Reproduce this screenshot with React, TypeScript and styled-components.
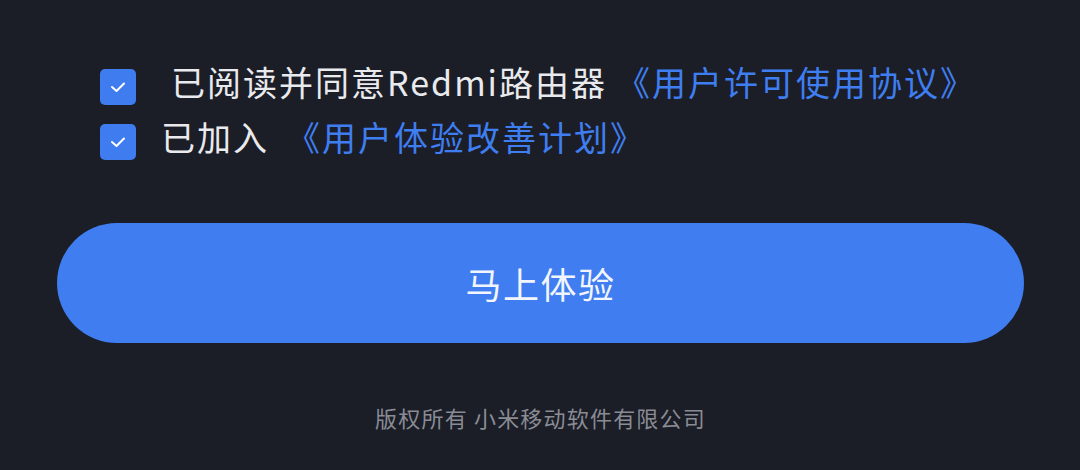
import React from "react";
import styled, { createGlobalStyle } from "styled-components";

const GlobalStyle = createGlobalStyle`
    html, body {
        margin: 0;
        padding: 0;
        background: #1b1d27;
    }
    body {
        font-family: "Noto Sans CJK SC", "Noto Sans", sans-serif;
    }
`;

const Page = styled.div`
    width: 1080px;
    height: 470px;
    box-sizing: border-box;
    padding: 67px 56px 0 57px;
    display: flex;
    flex-direction: column;
    background: #1b1d27;
`;

const Agreements = styled.div`
    display: flex;
    flex-direction: column;
    gap: 19px;
    padding-left: 43px;
`;

const Row = styled.label`
    display: flex;
    align-items: center;
    height: 36px;
    gap: ${(p: { $gap: number }) => p.$gap}px;
    color: #e9eaed;
    font-size: 34px;
    line-height: 36px;
    letter-spacing: 2px;
    white-space: nowrap;
`;

const Box = styled.span`
    flex: none;
    width: 36px;
    height: 36px;
    border-radius: 5px;
    background: #3e7cf0;
    display: flex;
    align-items: center;
    justify-content: center;
    margin-top: 3px;
`;

const Label = styled.span`
    display: inline-flex;
    align-items: center;
    margin-top: -6px;
`;

const Link = styled.a`
    color: #3f7ef0;
    text-decoration: none;
    margin-left: ${(p: { $offset: number }) => p.$offset}px;
`;

const StartButton = styled.button`
    margin-top: 65px;
    height: 120px;
    width: 100%;
    border: none;
    border-radius: 60px;
    background: #3f7df0;
    color: #f2f5fd;
    font-family: "Noto Sans CJK SC", "Noto Sans", sans-serif;
    font-size: 36px;
    letter-spacing: 1.5px;
    cursor: pointer;
`;

const Footer = styled.div`
    margin-top: 59px;
    text-align: center;
    color: #8a8c94;
    font-size: 22px;
    line-height: 30px;
    letter-spacing: 1.2px;
`;

const Check = () => (
    <svg width="16" height="12" viewBox="0 0 16 12">
        <polyline
            points="2,6 6.5,10 14,2.5"
            fill="none"
            stroke="#ffffff"
            strokeWidth="2"
            strokeLinecap="round"
            strokeLinejoin="round"
        />
    </svg>
);

export default function App() {
    return (
        <>
            <GlobalStyle />
            <Page>
                <Agreements>
                    <Row $gap={35}>
                        <Box>
                            <Check />
                        </Box>
                        <Label>
                            已阅读并同意Redmi路由器
                            <Link $offset={9} href="#">《用户许可使用协议》</Link>
                        </Label>
                    </Row>
                    <Row $gap={25}>
                        <Box>
                            <Check />
                        </Box>
                        <Label>
                            已加入
                            <Link $offset={17} href="#">《用户体验改善计划》</Link>
                        </Label>
                    </Row>
                </Agreements>
                <StartButton>马上体验</StartButton>
                <Footer>版权所有 小米移动软件有限公司</Footer>
            </Page>
        </>
    );
}
